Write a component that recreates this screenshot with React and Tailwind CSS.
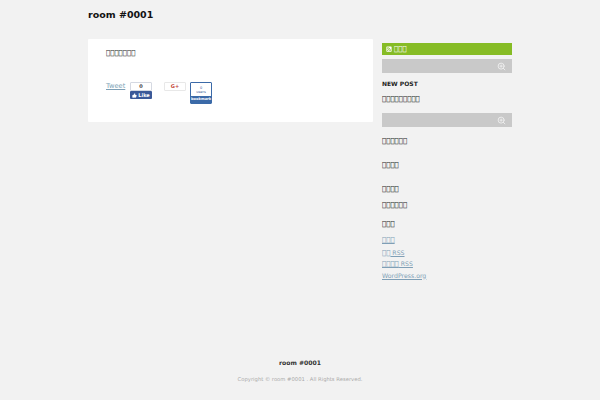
import { ZoomIn, ThumbsUp } from 'lucide-react';
import { FaRssSquare } from 'react-icons/fa';

const sans = { fontFamily: '"DejaVu Sans", sans-serif' };

// the reference shows missing-glyph boxes for its Japanese text
const box = (n) => '\uE000'.repeat(n);

function SearchBar() {
  return (
    <div className="h-[14px] bg-[#c9c9c9] flex items-center justify-end pr-[6px]">
      <ZoomIn className="w-[9px] h-[9px] text-[#eeeeee]" strokeWidth={2.5} />
    </div>
  );
}

function LikeBox() {
  return (
    <div className="w-[22px] flex flex-col">
      <div className="h-[9px] bg-white border border-[#d5d9e2] rounded-[1px] text-[5px] leading-[7px] font-bold text-center text-[#444]">0</div>
      <div className="h-[8px] bg-[#3b5998] rounded-[1px] flex items-center justify-center gap-[1px] text-[5px] leading-[8px] font-bold text-white">
        <ThumbsUp className="w-[5px] h-[5px] fill-white" strokeWidth={1} />
        Like
      </div>
    </div>
  );
}

function GPlusBox() {
  return (
    <div className="w-[22px] h-[9px] bg-white border border-[#e8e8e8] rounded-[1px] text-[5px] leading-[7px] font-bold text-center text-[#c4473a]">G+</div>
  );
}

function BookmarkBox() {
  return (
    <div className="w-[22px] h-[22px] border border-[#3b6aa8] rounded-[1px] bg-white flex flex-col">
      <div className="flex-1 text-[3.5px] leading-[4px] text-center text-[#3b5998] pt-[3px]">0<div>users</div></div>
      <div className="h-[7px] bg-[#3b6aa8] text-[3.6px] leading-[7px] font-bold text-white text-center">bookmark</div>
    </div>
  );
}

export default function App() {
  return (
    <div className="w-[600px] h-[400px] overflow-hidden bg-[#f2f2f2] flex flex-col" style={sans}>
      <div className="w-[424px] mx-auto flex-1">
        <h1 className="pt-[8px] h-[39px] text-[9.5px] leading-[13px] font-bold text-[#111]">room #0001</h1>

        <div className="flex justify-between items-start">
          {/* Main card */}
          <div className="w-[285px] h-[83px] bg-white rounded-[1px] px-[18px] pt-[10px]">
            <p className="text-[7px] leading-[9px] text-[#222]">{box(7)}</p>
            <div className="flex items-start mt-[24px]">
              <a className="text-[6.7px] leading-[9px] text-[#7d9fb5] underline w-[24px]">Tweet</a>
              <LikeBox />
              <div className="w-[12px]" />
              <GPlusBox />
              <div className="w-[4px]" />
              <BookmarkBox />
            </div>
          </div>

          {/* Sidebar */}
          <aside className="w-[130px] pt-[4px]">
            <div className="h-[12px] bg-[#86bc25] flex items-center gap-[2px] pl-[4px] text-white">
              <FaRssSquare className="w-[6px] h-[6px]" />
              <span className="text-[7px] leading-[9px] underline">{box(3)}</span>
            </div>
            <div className="mt-[4px]"><SearchBar /></div>
            <h2 className="mt-[6px] text-[6px] leading-[9px] font-bold text-[#222]">NEW POST</h2>
            <p className="mt-[7px] text-[7px] leading-[9px] text-[#222]">{box(9)}</p>
            <div className="mt-[9px]"><SearchBar /></div>
            <p className="mt-[10px] text-[7px] leading-[9px] text-[#222]">{box(6)}</p>
            <p className="mt-[15px] text-[7px] leading-[9px] text-[#222]">{box(4)}</p>
            <p className="mt-[15px] text-[7px] leading-[9px] text-[#222]">{box(4)}</p>
            <p className="mt-[7px] text-[7px] leading-[9px] text-[#222]">{box(6)}</p>
            <p className="mt-[10px] text-[7px] leading-[9px] text-[#222]">{box(3)}</p>
            <ul className="mt-[6px] text-[6.2px] leading-[11.5px] text-[#7f9fb6] underline">
              <li className="h-[11.5px] text-[7px]">{box(3)}</li>
              <li className="h-[11.5px]"><span className="text-[7px]">{box(2)}</span> RSS</li>
              <li className="h-[11.5px]"><span className="text-[7px]">{box(4)}</span> RSS</li>
              <li className="h-[11.5px]">WordPress.org</li>
            </ul>
          </aside>
        </div>
      </div>

      <footer className="text-center pb-[17px]">
        <p className="text-[6.1px] leading-[9px] font-bold text-[#333]">room #0001</p>
        <p className="mt-[8px] text-[5.25px] leading-[8px] text-[#aaa]">Copyright © room #0001 . All Rights Reserved.</p>
      </footer>
    </div>
  );
}
